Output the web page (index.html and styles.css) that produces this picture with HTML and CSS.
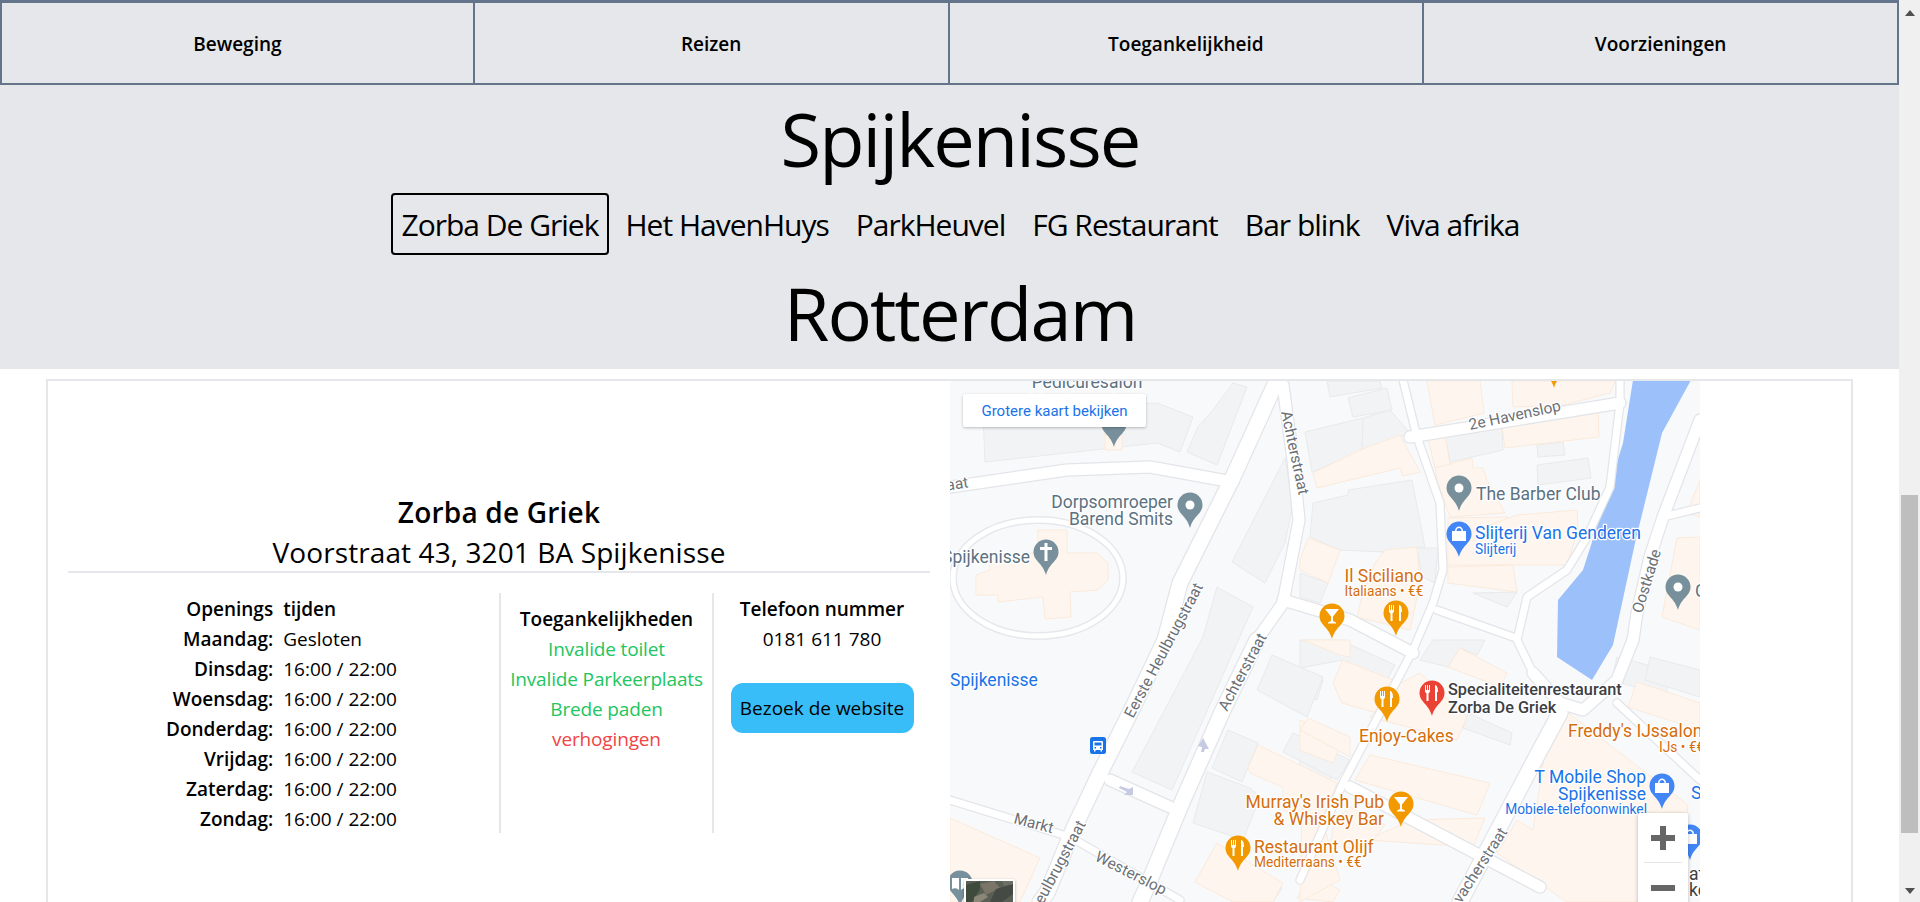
FILE: index.html
```html
<!DOCTYPE html>
<html lang="nl">
<head>
<meta charset="utf-8">
<title>Spijkenisse</title>
<link rel="stylesheet" href="styles.css">
</head>
<body>
<div class="app">
  <div class="page">
    <nav class="topnav">
      <a class="topnav-item">Beweging</a>
      <a class="topnav-item">Reizen</a>
      <a class="topnav-item">Toegankelijkheid</a>
      <a class="topnav-item">Voorzieningen</a>
    </nav>
    <header class="cities">
      <h1 class="city city-first">Spijkenisse</h1>
      <div class="places">
        <a class="place place-active">Zorba De Griek</a>
        <a class="place">Het HavenHuys</a>
        <a class="place">ParkHeuvel</a>
        <a class="place">FG Restaurant</a>
        <a class="place">Bar blink</a>
        <a class="place">Viva afrika</a>
      </div>
      <h1 class="city city-second">Rotterdam</h1>
    </header>
    <section class="card">
      <div class="info">
        <h2 class="info-name">Zorba de Griek</h2>
        <p class="info-address">Voorstraat 43, 3201 BA Spijkenisse</p>
        <div class="info-columns">
          <div class="col col-hours">
            <div class="hours">
              <b class="day">Openings</b><b>tijden</b>
              <b class="day">Maandag:</b><span>Gesloten</span>
              <b class="day">Dinsdag:</b><span>16:00 / 22:00</span>
              <b class="day">Woensdag:</b><span>16:00 / 22:00</span>
              <b class="day">Donderdag:</b><span>16:00 / 22:00</span>
              <b class="day">Vrijdag:</b><span>16:00 / 22:00</span>
              <b class="day">Zaterdag:</b><span>16:00 / 22:00</span>
              <b class="day">Zondag:</b><span>16:00 / 22:00</span>
            </div>
          </div>
          <div class="col col-access">
            <b>Toegankelijkheden</b>
            <span class="yes">Invalide toilet</span>
            <span class="yes">Invalide Parkeerplaats</span>
            <span class="yes">Brede paden</span>
            <span class="no">verhogingen</span>
          </div>
          <div class="col col-contact">
            <b>Telefoon nummer</b>
            <span>0181 611 780</span>
            <a class="visit">Bezoek de website</a>
          </div>
        </div>
      </div>
      <div class="map">
        <svg class="map-svg" viewBox="950 381 750 521" width="750" height="521" aria-label="Kaart">
          <defs>
            <path id="pin" d="M0 -12.5C7 -12.5 12.5 -7 12.5 0C12.5 9 3 11 0 23C-3 11 -12.5 9 -12.5 0C-12.5 -7 -7 -12.5 0 -12.5Z"/>
            <g id="dot"><circle r="4.5" class="w"/></g>
            <g id="fork"><path class="w" d="M-7 -8H-6V-3H-5V-8H-4V-3H-3V-8H-2V-2C-2 -.5 -3 0 -3.5 .2V8H-5.500V.2C-6 0 -7 -.5 -7 -2ZM3 -8C5.500 -8 6 -4 6 -1H5V8H3Z"/></g>
            <g id="glass"><path class="w" d="M-7 -7H7L1 .5V5L4 6.500V7.500H-4V6.500L-1 5V.5Z"/></g>
            <g id="bag"><path class="w" d="M-7 -3H-4C-4 -9 4 -9 4 -3H7V7H-7ZM-2.500 -3H2.500C2.500 -7 -2.500 -7 -2.500 -3Z"/></g>
            <g id="r1">
              <polyline points="1277,380 1233,477 1180,583 1165,640 1133,707 1100,773 1073,830 1047,893 1040,902"/>
              <polyline points="1257,640 1223,710 1183,800 1147,887 1140,902"/>
              <polyline points="1560,713 1540,750 1460,902"/>
            </g>
            <g id="r2">
              <polyline points="1283,385 1293,460 1299,520 1283,603 1257,640"/>
              <polyline points="950,487 1067,470 1150,467 1233,482"/>
              <polyline points="1410,437 1620,403"/>
              <polyline points="1283,600 1350,620 1413,653"/>
              <polyline points="1110,780 1170,807"/>
              <polyline points="1700,420 1663,517 1650,557 1637,613 1633,640"/>
              <polyline points="1350,787 1540,887"/>
              <polyline points="1533,673 1560,703 1583,710 1617,680 1633,640"/>
            </g>
            <g id="r3">
              <polyline points="1403,380 1417,437 1440,503 1443,570 1433,603 1413,650 1343,783 1300,880"/>
              <polyline points="1620,380 1620,403 1610,487 1587,537 1567,570 1527,597 1517,640 1533,673"/>
              <polyline points="1437,610 1513,637"/>
              <polyline points="1617,703 1700,780"/>
              <polyline points="1663,517 1700,508"/>
              <polyline points="950,800 1070,837 1180,900"/>
            </g>
          </defs>
          <rect class="ground" x="950" y="380" width="750" height="522"/>

          <polygon class="wat" points="1633,380 1691,380 1662,433 1635,543 1613,645 1592,680 1557,657 1558,600 1583,570 1600,517 1623,443"/>

          <g class="bld">
            <polygon points="983,413 1157,403 1193,417 1180,452 1157,443 985,462"/>
            <polygon points="1187,452 1198,427 1213,410 1233,383 1247,387 1217,465"/>
            <polygon points="1232,562 1285,458 1293,503 1285,543 1265,583"/>
            <polygon points="1132,772 1203,637 1217,587 1253,607 1172,790"/>
            <polygon points="1327,381 1380,381 1382,388 1330,397"/>
            <polygon points="1348,398 1387,388 1392,410 1353,417"/>
            <polygon points="1305,432 1363,418 1368,448 1312,472"/>
            <polygon points="1363,418 1390,410 1410,433 1362,450"/>
            <polygon points="1445,435 1502,427 1503,450 1450,462"/>
            <polygon points="1537,445 1563,442 1565,455 1538,457"/>
            <polygon points="1537,465 1588,458 1591,478 1538,485"/>
            <polygon points="1313,503 1348,495 1348,490 1412,480 1425,547 1383,552 1340,550 1310,537"/>
            <polygon points="1300,573 1328,583 1320,603 1300,597"/>
            <polygon points="1417,548 1438,548 1435,583 1422,577"/>
            <polygon points="1473,593 1517,592 1507,607"/>
            <polygon points="1300,640 1340,640 1395,665 1387,680 1343,660 1300,668"/>
            <polygon points="1420,660 1433,640 1485,640 1477,655 1460,648 1448,667"/>
            <polygon points="1468,713 1512,733 1510,745 1463,728"/>
            <polygon points="1300,670 1323,680 1317,700 1300,693"/>
            <polygon points="1300,750 1333,763 1330,783 1300,773"/>
            <polygon points="1612,680 1617,657 1667,670 1667,697"/>
            <polygon points="1645,680 1650,657 1700,670 1700,697"/>
            <polygon points="1212,768 1228,730 1258,743 1242,782"/>
            <polygon points="1193,823 1207,772 1250,788 1260,797 1243,840"/>
            <polygon points="1257,690 1272,655 1323,677 1307,717"/>
            <polygon points="1283,752 1293,733 1350,760 1337,780"/>
            <polygon points="1237,893 1250,872 1282,888 1273,902 1243,902"/>
          </g>

          <g class="com">
            <polygon points="1105,427 1122,427 1122,450 1105,450"/>
            <polygon points="1038,530 1067,530 1067,553 1097,553 1108,563 1108,580 1097,590 1070,592 1071,617 1045,619 1043,597 998,602 998,595 976,595 976,575 990,570 990,560 1038,552"/>
            <polygon points="1427,381 1480,381 1484,413 1435,425"/>
            <polygon points="1512,381 1615,381 1610,393 1563,405 1513,407"/>
            <polygon points="1360,450 1400,435 1420,472 1403,476 1400,468 1317,488 1313,473"/>
            <polygon points="1428,438 1445,435 1450,465 1435,468"/>
            <polygon points="1502,427 1598,405 1599,437 1505,448"/>
            <polygon points="1435,468 1472,458 1473,468 1483,468 1487,480 1505,513 1450,517 1438,483"/>
            <polygon points="1448,518 1508,517 1510,533 1448,535"/>
            <polygon points="1517,515 1577,510 1578,530 1567,565 1448,565 1448,540"/>
            <polygon points="1448,567 1513,565 1517,592 1448,583"/>
            <polygon points="1308,538 1340,550 1328,583 1300,570 1300,560"/>
            <polygon points="1385,550 1417,547 1420,583 1410,630 1357,617 1362,597 1375,563"/>
            <polygon points="1677,538 1700,537 1700,630 1662,617"/>
            <polygon points="1687,513 1700,480 1700,517"/>
            <polygon points="1333,683 1343,660 1393,680 1377,713 1342,703"/>
            <polygon points="1397,685 1420,673 1467,717 1457,740 1370,717"/>
            <polygon points="1448,667 1460,648 1507,673 1500,687"/>
            <polygon points="1300,720 1343,740 1333,763 1300,750"/>
            <polygon points="1355,780 1370,755 1490,783 1477,815"/>
            <polygon points="1412,820 1485,818 1473,847 1367,840"/>
            <polygon points="1335,820 1350,807 1385,825 1365,850 1330,845"/>
            <polygon points="1547,737 1567,712 1688,805 1687,813 1638,813 1638,902 1567,902 1497,853 1517,820 1533,830"/>
            <polygon points="1628,707 1637,682 1700,703 1700,730"/>
            <polygon points="950,818 1040,858 1020,902 950,902"/>
            <polygon points="1248,768 1258,745 1337,783 1320,827 1283,810 1283,787 1250,773"/>
            <polygon points="1300,730 1308,718 1350,737 1350,757"/>
            <polygon points="1195,882 1217,843 1283,883 1273,902 1233,902"/>
            <polygon points="1297,898 1312,875 1340,890 1333,902"/>
            <polygon points="1303,640 1350,640 1350,657 1340,655"/>
            <polygon points="1302,808 1325,830 1340,880 1300,902"/>
          </g>

          <use class="road-c r-w3" href="#r3"/>
          <use class="road-c r-w2" href="#r2"/>
          <use class="road-c r-w1" href="#r1"/>
          <ellipse class="ring-c" cx="1038" cy="578" rx="85" ry="58"/>
          <ellipse class="ring" cx="1038" cy="578" rx="85" ry="58"/>
          <use class="road-f f-w3" href="#r3"/>
          <use class="road-f f-w2" href="#r2"/>
          <use class="road-f f-w1" href="#r1"/>
          <polygon class="arrow" points="1203,738 1209,749 1205,749 1204,752 1201,752 1202,747 1198,746"/>
          <polygon class="arrow" points="1133,795 1133,787 1129,789 1120,786 1119,788 1127,792 1124,795"/>

          <g class="lbl-street">
            <text transform="translate(1281,412) rotate(78)">Achterstraat</text>
            <text transform="translate(950,490) rotate(-8)" x="-3">aat</text>
            <text transform="translate(1133,719) rotate(-62)">Eerste Heulbrugstraat</text>
            <text transform="translate(1227,712) rotate(-62)">Achterstraat</text>
            <text transform="translate(1043,905) rotate(-62)">eulbrugstraat</text>
            <text transform="translate(1013,823) rotate(15)">Markt</text>
            <text transform="translate(1094,860) rotate(27)">Westerslop</text>
            <text transform="translate(1470,430) rotate(-12)">2e Havenslop</text>
            <text transform="translate(1642,614) rotate(-73)">Oostkade</text>
            <text transform="translate(1461,904) rotate(-57)">vacherstraat</text>
          </g>

          <g class="pin-gray">
            <use href="#pin" x="1114" y="424"/>
            <use href="#pin" x="1190" y="505"/>
            <use href="#pin" x="1046" y="552"/>
            <use href="#pin" x="1459" y="488"/>
            <use href="#pin" x="1678" y="587"/>
            <use href="#pin" x="960" y="883"/>
          </g>
          <use href="#dot" x="1190" y="505"/>
          <use href="#dot" x="1459" y="488"/>
          <use href="#dot" x="1678" y="587"/>
          <path class="w" d="M1044.500 543H1047.500V547H1052V550H1047.500V561H1044.500V550H1040V547H1044.500Z"/>
          <path class="w" d="M952 878H959V890C957 888 954 888 952 889ZM961 878H968V889C966 888 963 888 961 890Z"/>

          <g class="pin-blue">
            <use href="#pin" x="1459" y="534"/>
            <use href="#pin" x="1662" y="786"/>
            <use href="#pin" x="1690" y="837"/>
          </g>
          <use href="#bag" x="1459" y="534"/>
          <use href="#bag" x="1662" y="786"/>
          <use href="#bag" x="1690" y="837"/>

          <g class="pin-orange">
            <use href="#pin" x="1554" y="365"/>
            <use href="#pin" x="1332" y="616"/>
            <use href="#pin" x="1396" y="613"/>
            <use href="#pin" x="1238" y="848"/>
            <use href="#pin" x="1387" y="699"/>
            <use href="#pin" x="1401" y="804"/>
          </g>
          <use href="#glass" x="1332" y="616"/>
          <use href="#glass" x="1401" y="804"/>
          <use href="#fork" x="1396" y="613"/>
          <use href="#fork" x="1238" y="848"/>
          <use href="#fork" x="1387" y="699"/>

          <use class="pin-red" href="#pin" x="1432" y="693"/>
          <use href="#fork" x="1432" y="693"/>

          <rect class="bus" x="1090" y="737" width="16" height="17" rx="2.500"/>
          <path class="w" d="M1094 741H1102Q1103 741 1103 742V750H1102V751.500H1100.500V750H1095.500V751.500H1094V750H1093V742Q1093 741 1094 741ZM1094.500 742.500V745.500H1101.500V742.500ZM1094.500 747V748.500H1096V747ZM1100 747V748.500H1101.500V747Z"/>

          <g class="lbl-poi">
            <text x="1087" y="388" text-anchor="middle">Pedicuresalon</text>
            <text x="1087" y="407" text-anchor="middle">Montessoriestr</text>
            <text x="1173" y="508" text-anchor="end">Dorpsomroeper</text>
            <text x="1173" y="525" text-anchor="end">Barend Smits</text>
            <text x="1030" y="563" text-anchor="end">Spijkenisse</text>
            <text x="1476" y="500">The Barber Club</text>
          </g>
          <g class="lbl-blue">
            <text x="1475" y="539">Slijterij Van Genderen</text>
            <text class="small" x="1475" y="554">Slijterij</text>
            <text x="950" y="686">Spijkenisse</text>
            <text x="1646" y="783" text-anchor="end">T Mobile Shop</text>
            <text x="1646" y="800" text-anchor="end">Spijkenisse</text>
            <text class="small" x="1647" y="814" text-anchor="end">Mobiele-telefoonwinkel</text>
            <text x="1691" y="799">S</text>
          </g>
          <g class="lbl-orange">
            <text x="1384" y="582" text-anchor="middle">Il Siciliano</text>
            <text class="small" x="1384" y="596" text-anchor="middle">Italiaans • €€</text>
            <text x="1359" y="742">Enjoy-Cakes</text>
            <text x="1568" y="737">Freddy's IJssalon</text>
            <text class="small" x="1659" y="752">IJs • €€</text>
            <text x="1384" y="808" text-anchor="end">Murray's Irish Pub</text>
            <text x="1384" y="825" text-anchor="end">&amp; Whiskey Bar</text>
            <text x="1254" y="853">Restaurant Olijf</text>
            <text class="small" x="1254" y="867">Mediterraans • €€</text>
          </g>
          <g class="lbl-dark">
            <text x="1448" y="695">Specialiteitenrestaurant</text>
            <text x="1448" y="713">Zorba De Griek</text>
          </g>
          <text class="lbl-poi-single" x="1695" y="597">C</text>
          <text class="lbl-dark-edge" x="1689" y="880">at</text>
          <text class="lbl-dark-edge" x="1689" y="896">ke</text>
        </svg>

        <a class="map-link">Grotere kaart bekijken</a>
        <div class="map-thumb">
          <svg class="thumb-svg" viewBox="0 0 47 21" width="47" height="21">
            <rect width="47" height="21" fill="#5a5f55"/>
            <path fill="#3e4a3c" d="M0 4L14 0V8L6 21H0Z"/>
            <path fill="#7b7468" d="M14 3L28 0L34 7L20 14Z"/>
            <path fill="#454a44" d="M30 8L47 3V13L36 21H24Z"/>
            <path fill="#6c6f66" d="M36 0H47V3L38 5Z"/>
            <path fill="#8a8779" d="M8 16L18 12L22 16L14 21H8Z"/>
          </svg>
        </div>
        <div class="map-zoom">
          <svg class="zoom-ico" viewBox="0 0 50 50" width="50" height="50"><path class="ico" d="M22 13H28V22H37V28H28V37H22V28H13V22H22Z"/></svg>
          <div class="zoom-sep"></div>
          <svg class="zoom-ico" viewBox="0 0 50 50" width="50" height="50"><path class="ico" d="M13 22H37V28H13Z"/></svg>
        </div>
      </div>
    </section>
  </div>
  <div class="scrollbar">
    <span class="sb-up"></span>
    <span class="sb-thumb"></span>
    <span class="sb-down"></span>
  </div>
</div>
</body>
</html>
```
FILE: styles.css
```css
html, body { margin: 0; padding: 0; height: 100%; }
body { font-family: "Open Sans", "Noto Sans", sans-serif; color: #000; overflow: hidden; background: #fff; }
.app { display: flex; height: 902px; overflow: hidden; }
.page { flex: 1 1 auto; min-width: 0; overflow: hidden; }

.topnav { display: grid; grid-template-columns: repeat(4, 1fr); height: 85px; box-sizing: border-box; background: #e5e7eb; border-top: 3px solid #64748b; border-bottom: 2px solid #64748b; }
.topnav-item { display: flex; align-items: center; justify-content: center; font-size: 19px; font-weight: 600; border-right: 2px solid #64748b; padding-top: 1px; }
.topnav-item:first-child { border-left: 2px solid #64748b; }

.cities { background: #e5e7eb; height: 284px; display: flex; flex-direction: column; align-items: center; }
.city { margin: 0; padding-left: 21px; font-weight: 400; font-size: 74px; line-height: 98px; }
.city-first { margin-top: 5px; letter-spacing: -1.900px; }
.city-second { margin-top: 9px; letter-spacing: -1.900px; }
.places { display: flex; align-items: center; gap: 6px; margin-top: 5px; padding-left: 22px; }
.place { font-size: 30px; letter-spacing: -1px; padding: 0 8.500px; height: 62px; display: flex; align-items: center; border: 2px solid transparent; border-radius: 4px; box-sizing: border-box; }
.place-active { border-color: #000; }

.card { display: flex; margin: 10px 46px 0; border: 2px solid #e5e7eb; height: 700px; }
.info { width: 902px; box-sizing: border-box; padding: 111px 20px 0; flex: none; text-align: center; }
.info-name { margin: 0; font-size: 28px; line-height: 41px; font-weight: 600; letter-spacing: .2px; }
.info-address { margin: 0; font-size: 28px; line-height: 38px; letter-spacing: .1px; border-bottom: 2px solid #e5e7eb; }
.info-columns { display: flex; margin-top: 20px; height: 240px; font-size: 19px; line-height: 30px; }
.col { box-sizing: border-box; display: flex; flex-direction: column; align-items: center; }
.col b { font-weight: 600; }
.col-hours { width: 433px; border-right: 2px solid #e5e7eb; }
.hours { display: grid; grid-template-columns: auto auto; column-gap: 10px; justify-items: start; align-self: flex-start; margin: 1px 0 0 98px; }
.hours .day { justify-self: end; }
.col-access { width: 213px; border-right: 2px solid #e5e7eb; padding-top: 11px; }
.col-contact { flex: 1; padding-top: 1px; }
.yes, .no { letter-spacing: -.15px; }
.yes { color: #22c55e; }
.no { color: #ef4444; }
.visit { margin-top: 29px; width: 183px; height: 50px; display: flex; align-items: center; justify-content: center; border-radius: 12px; background: #38bdf8; }

.map { position: relative; width: 750px; flex: none; overflow: hidden; }
.map-svg { display: block; font-family: Roboto, sans-serif; }
.ground { fill: #f8f9fb; }
.wat { fill: #9cc0f9; }
.bld polygon { fill: #f1f3f4; stroke: #e8eaec; stroke-width: 1; }
.com polygon { fill: #fef6ee; stroke: #fbeadb; stroke-width: 1; }
.road-c, .road-f { fill: none; stroke-linejoin: round; stroke-linecap: round; }
.road-c { stroke: #e3e5e9; }
.road-f { stroke: #fff; }
.r-w1 { stroke-width: 17.500px; }
.f-w1 { stroke-width: 15px; }
.r-w2 { stroke-width: 13.500px; }
.f-w2 { stroke-width: 11px; }
.r-w3 { stroke-width: 9.500px; }
.f-w3 { stroke-width: 7px; }
.ring-c { fill: none; stroke: #e6e8eb; stroke-width: 8; }
.ring { fill: none; stroke: #fff; stroke-width: 5; }
.arrow { fill: #c6cbe3; }
.w { fill: #fff; }
.map-svg text { paint-order: stroke; stroke: #fff; stroke-width: 2.500px; stroke-linejoin: round; font-size: 17.500px; }
.map-svg text.small { font-size: 13.750px; }
.map-svg .lbl-street text { fill: #6b7076; font-size: 15.500px; }
.lbl-poi text, .map-svg .lbl-poi-single { fill: #5b7282; }
.lbl-blue text { fill: #1a73e8; }
.lbl-orange text { fill: #d56e0c; }
.map-svg .lbl-dark text { fill: #3c4043; font-weight: 500; font-size: 16.300px; }
.map-svg .lbl-dark-edge { fill: #3c4043; }
.pin-gray { fill: #78909c; }
.pin-blue { fill: #4285f4; }
.pin-orange { fill: #f29900; }
.pin-red { fill: #ea4335; }
.bus { fill: #1a73e8; }

.map-link { position: absolute; left: 13px; top: 13px; width: 183px; height: 33px; display: flex; align-items: center; justify-content: center; background: #fff; border-radius: 2px; box-shadow: 0 1px 3px rgba(0,0,0,.25); color: #1a73e8; font: 400 15px Roboto, sans-serif; }
.map-thumb { position: absolute; left: 14px; top: 498px; width: 47px; height: 60px; border: 2px solid #fff; border-radius: 2px; box-shadow: 0 1px 3px rgba(0,0,0,.3); background: #5a5f55; }
.thumb-svg { display: block; }
.map-zoom { position: absolute; left: 688px; top: 432px; width: 50px; height: 100px; background: #fff; box-shadow: 0 1px 4px rgba(0,0,0,.25); border-radius: 2px; display: flex; flex-direction: column; }
.zoom-ico { display: block; flex: none; }
.zoom-sep { height: 1px; margin: -1px 6px 0; background: #e6e6e6; flex: none; }
.ico { fill: #666; }

.scrollbar { width: 21px; flex: none; background: #f0f0f0; position: relative; display: flex; flex-direction: column; align-items: center; }
.sb-up { margin-top: 10px; width: 0; height: 0; border-left: 5px solid transparent; border-right: 5px solid transparent; border-bottom: 6px solid #505050; }
.sb-thumb { position: absolute; top: 495px; left: 2px; width: 17px; height: 338px; background: #bebebe; }
.sb-down { margin-top: auto; margin-bottom: 8px; width: 0; height: 0; border-left: 5px solid transparent; border-right: 5px solid transparent; border-top: 6px solid #505050; }
```
